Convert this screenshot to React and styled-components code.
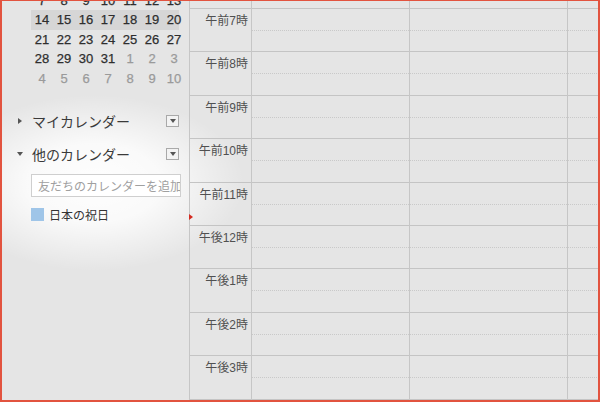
import styled, { createGlobalStyle } from "styled-components";

const GlobalStyle = createGlobalStyle`
  html, body { margin: 0; padding: 0; background: #fff; }
`;

const weeks = [
  [7, 8, 9, 10, 11, 12, 13],
  [14, 15, 16, 17, 18, 19, 20],
  [21, 22, 23, 24, 25, 26, 27],
  [28, 29, 30, 31, 1, 2, 3],
  [4, 5, 6, 7, 8, 9, 10],
];

const hours = ["午前7時", "午前8時", "午前9時", "午前10時", "午前11時", "午後12時", "午後1時", "午後2時", "午後3時", ""];

const App = () => {
  return (
    <>
      <GlobalStyle />
      <Frame>
        <Sidebar>
          <MiniCal>
            {weeks.map((week, w) => (
              <Week key={w} current={w === 1}>
                {week.map((d, i) => (
                  <Day key={i} muted={(w === 3 && i > 3) || w === 4}>{d}</Day>
                ))}
              </Week>
            ))}
          </MiniCal>

          <Section>
            <Arrow />
            <SectionTitle>マイカレンダー</SectionTitle>
            <MenuBox><MenuCaret /></MenuBox>
          </Section>

          <Section second>
            <Arrow open />
            <SectionTitle>他のカレンダー</SectionTitle>
            <MenuBox><MenuCaret /></MenuBox>
          </Section>

          <AddInput placeholder="友だちのカレンダーを追加" />

          <CalItem>
            <Swatch />
            <span>日本の祝日</span>
          </CalItem>
        </Sidebar>

        <Grid>
          <NowMarker />
          <TimeCol>
            <TopStrip />
            {hours.map((h, i) => (
              <HourCell key={i}>
                <TimeLabel>{h}</TimeLabel>
              </HourCell>
            ))}
          </TimeCol>
          {[0, 1, 2].map(c => (
            <DayCol key={c} last={c === 2}>
              <TopStrip />
              {hours.map((h, i) => (
                <HourCell key={i}>
                  <HalfLine />
                </HourCell>
              ))}
            </DayCol>
          ))}
        </Grid>
      </Frame>
    </>
  );
};

export default App;

const Frame = styled.div`
  width: 600px;
  height: 402px;
  box-sizing: border-box;
  border: 2px solid #e2533f;
  border-top-width: 1px;
  display: flex;
  overflow: hidden;
  background:
    radial-gradient(ellipse 150px 88px at 92px 182px,
      rgba(255, 255, 255, 0.97) 0%,
      rgba(255, 255, 255, 0.8) 45%,
      rgba(255, 255, 255, 0) 100%),
    #e5e5e5;
  font-family: "Liberation Sans", "Noto Sans CJK JP", sans-serif;
  color: #333;
`;

const Sidebar = styled.div`
  width: 188px;
  flex-shrink: 0;
  border-right: 1px solid #c6c6c6;
  display: flex;
  flex-direction: column;
  padding: 0 10px 0 29px;
  box-sizing: border-box;
`;

const MiniCal = styled.div`
  margin-top: -10.5px;
  display: flex;
  flex-direction: column;
`;

const Week = styled.div`
  display: grid;
  grid-template-columns: repeat(7, 22px);
  height: 19.5px;
  background: ${p => (p.current ? "#d6d6d6" : "transparent")};
`;

const Day = styled.div`
  display: flex;
  align-items: center;
  justify-content: center;
  font-size: 13px;
  -webkit-text-stroke: 0.25px currentColor;
  color: ${p => (p.muted ? "#9a9a9a" : "#2e2e2e")};
`;

const Section = styled.div`
  display: flex;
  align-items: center;
  height: 24px;
  margin: ${p => (p.second ? "9px" : "21px")} 0 0 -13px;
`;

const Arrow = styled.span`
  width: 0;
  height: 0;
  margin-right: ${p => (p.open ? "9px" : "10px")};
  margin-left: ${p => (p.open ? "-1px" : "0")};
  border-style: solid;
  border-color: transparent;
  ${p =>
    p.open
      ? "border-width: 4px 3.5px 0 3.5px; border-top-color: #555;"
      : "border-width: 3.5px 0 3.5px 4px; border-left-color: #555;"}
`;

const SectionTitle = styled.span`
  flex: 1;
  font-family: "Noto Sans CJK JP", sans-serif;
  font-size: 14px;
  color: #3a3a3a;
`;

const MenuBox = styled.span`
  width: 11px;
  height: 10px;
  border: 1px solid #a9a9a9;
  background: #f3f3f3;
  display: flex;
  align-items: center;
  justify-content: center;
`;

const MenuCaret = styled.span`
  width: 0;
  height: 0;
  border-style: solid;
  border-color: #555 transparent transparent transparent;
  border-width: 4px 3.5px 0 3.5px;
`;

const AddInput = styled.input`
  margin-top: 8px;
  width: 150px;
  height: 23px;
  box-sizing: border-box;
  border: 1px solid #cfcfcf;
  background: #fff;
  padding: 0 0 0 6px;
  font-family: "Noto Sans CJK JP", sans-serif;
  font-size: 12px;
  outline: none;
  &::placeholder { color: #a0a0a0; }
`;

const CalItem = styled.div`
  display: flex;
  align-items: center;
  gap: 5px;
  margin-top: 9px;
  height: 16px;
  font-family: "Noto Sans CJK JP", sans-serif;
  font-size: 12px;
  color: #333;
`;

const Swatch = styled.span`
  width: 13px;
  height: 13px;
  background: #9fc5e8;
`;

const Grid = styled.div`
  flex: 1;
  display: flex;
  position: relative;
`;

const NowMarker = styled.span`
  position: absolute;
  left: -1px;
  top: 213px;
  width: 0;
  height: 0;
  border-style: solid;
  border-color: transparent transparent transparent #d42a20;
  border-width: 3.5px 0 3.5px 4px;
`;

const TimeCol = styled.div`
  width: 61px;
  flex-shrink: 0;
  display: flex;
  flex-direction: column;
`;

const DayCol = styled.div`
  width: 157px;
  flex: ${p => (p.last ? 1 : "none")};
  border-left: 1px solid #c6c6c6;
  display: flex;
  flex-direction: column;
`;

const TopStrip = styled.div`
  height: 7px;
  flex-shrink: 0;
`;

const HourCell = styled.div`
  height: 43.4px;
  flex-shrink: 0;
  box-sizing: border-box;
  border-top: 1px solid #c4c4c4;
  position: relative;
`;

const HalfLine = styled.div`
  margin-top: 21px;
  border-top: 1px dotted #c9c9c9;
`;

const TimeLabel = styled.div`
  text-align: right;
  padding: 4px 3px 0 0;
  font-size: 12px;
  line-height: 16px;
  color: #505050;
`;
